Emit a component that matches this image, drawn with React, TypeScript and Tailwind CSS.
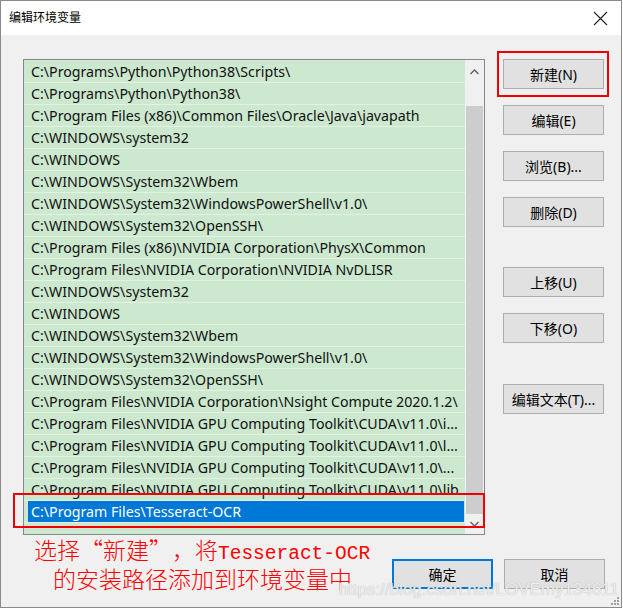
import React from "react";

const paths = [
  "C:\\Programs\\Python\\Python38\\Scripts\\",
  "C:\\Programs\\Python\\Python38\\",
  "C:\\Program Files (x86)\\Common Files\\Oracle\\Java\\javapath",
  "C:\\WINDOWS\\system32",
  "C:\\WINDOWS",
  "C:\\WINDOWS\\System32\\Wbem",
  "C:\\WINDOWS\\System32\\WindowsPowerShell\\v1.0\\",
  "C:\\WINDOWS\\System32\\OpenSSH\\",
  "C:\\Program Files (x86)\\NVIDIA Corporation\\PhysX\\Common",
  "C:\\Program Files\\NVIDIA Corporation\\NVIDIA NvDLISR",
  "C:\\WINDOWS\\system32",
  "C:\\WINDOWS",
  "C:\\WINDOWS\\System32\\Wbem",
  "C:\\WINDOWS\\System32\\WindowsPowerShell\\v1.0\\",
  "C:\\WINDOWS\\System32\\OpenSSH\\",
  "C:\\Program Files\\NVIDIA Corporation\\Nsight Compute 2020.1.2\\",
  "C:\\Program Files\\NVIDIA GPU Computing Toolkit\\CUDA\\v11.0\\i...",
  "C:\\Program Files\\NVIDIA GPU Computing Toolkit\\CUDA\\v11.0\\l...",
  "C:\\Program Files\\NVIDIA GPU Computing Toolkit\\CUDA\\v11.0\\...",
  "C:\\Program Files\\NVIDIA GPU Computing Toolkit\\CUDA\\v11.0\\lib",
];

const ui = "font-['Segoe_UI','Noto_Sans','Noto_Sans_CJK_SC',sans-serif]";

function Btn({ label, primary }: { label: string; primary?: boolean }) {
  return (
    <button
      className={`w-[101px] h-[30px] bg-[#e1e1e1] text-[14px] text-black ${ui} ${
        primary ? "border-2 border-[#0078d7]" : "border border-[#adadad]"
      }`}
    >
      {label}
    </button>
  );
}

function Chevron({ up }: { up?: boolean }) {
  return (
    <svg width="9" height="6" viewBox="0 0 9 6">
      <path
        d={up ? "M0.5 5 L4.5 1 L8.5 5" : "M0.5 1 L4.5 5 L8.5 1"}
        fill="none"
        stroke="#606060"
        strokeWidth="1.3"
      />
    </svg>
  );
}

export default function App() {
  return (
    <div className="w-[623px] h-[611px] bg-white">
      <div className="relative w-[622px] h-[608px] flex flex-col border border-[#8a8a8a] bg-[#f0f0f0]">
        {/* Title bar */}
        <div className="h-[34px] shrink-0 bg-white flex items-center justify-between pl-[8px] pr-[13px]">
          <span className={`text-[12px] text-black ${ui}`}>编辑环境变量</span>
          <svg width="15" height="15" viewBox="0 0 15 15">
            <path d="M1 1 L14 14 M14 1 L1 14" stroke="#222" strokeWidth="1.1" />
          </svg>
        </div>

        <div className="flex flex-1 pt-[24px] pl-[22px]">
          {/* Left side: path list + note */}
          <div className="flex flex-col w-[462px]">
            <div className="relative h-[476px] flex border border-[#828790] bg-[#cce8cf]">
              <div className="flex-1 overflow-hidden pt-[1px]">
                {paths.map((p, i) => (
                  <div
                    key={i}
                    className={`h-[22px] flex items-center pl-[7px] border-b border-[#e4f2e4] whitespace-nowrap overflow-hidden text-[14.2px] text-[#111] ${ui}`}
                  >
                    {p}
                  </div>
                ))}
                <div className="h-[22px] flex items-center pl-[4px] pr-[1px] border-b border-[#e4f2e4]">
                  <div
                    className={`h-[21px] w-full flex items-center pl-[3px] bg-[#0078d7] text-white text-[14.2px] ${ui}`}
                  >
                    C:\Program Files\Tesseract-OCR
                  </div>
                </div>
              </div>
              {/* Vertical scrollbar */}
              <div className="w-[19px] flex flex-col bg-[#f0f0f0]">
                <div className="h-[23px] flex items-center justify-center">
                  <Chevron up />
                </div>
                <div className="h-[23px]" />
                <div className="flex-1 mx-[1px] bg-[#cdcdcd]" />
                <div className="h-[20px] flex items-center justify-center">
                  <Chevron />
                </div>
              </div>
              {/* Highlight around the new entry */}
              <div className="absolute left-[-11px] right-[-1px] top-[433px] h-[35px] border-2 border-[#f00000]" />
            </div>

            <div className="pl-[11px] text-[23px] text-[#ff0000] font-['Noto_Sans_CJK_SC',serif] font-light">
              <div className="h-[29px] leading-[29px] whitespace-nowrap">
                选择<span className="inline-block w-[23px] text-right">“</span>新建
                <span className="inline-block w-[23px] text-left">”</span>，将
                <span className="text-[19.5px] font-['Liberation_Mono',monospace] font-normal">
                  Tesseract-OCR
                </span>
              </div>
              <div className="h-[29px] leading-[29px] pl-[19px]">的安装路径添加到环境变量中</div>
            </div>
          </div>

          {/* Right side: action buttons */}
          <div className="flex flex-col pl-[18px]">
            <div className="relative flex flex-col gap-[16px]">
              <Btn label="新建(N)" />
              <Btn label="编辑(E)" />
              <Btn label="浏览(B)..." />
              <Btn label="删除(D)" />
              <div className="h-[8px]" />
              <Btn label="上移(U)" />
              <Btn label="下移(O)" />
              <div className="h-[9px]" />
              <Btn label="编辑文本(T)..." />
              <div className="absolute left-[-6px] top-[-8px] w-[112px] h-[46px] border-2 border-[#f00000]" />
            </div>
          </div>
        </div>

        {/* Dialog buttons */}
        <div className="absolute right-[16px] bottom-[18px] flex gap-[11px]">
          <Btn label="确定" primary />
          <Btn label="取消" />
        </div>

        <span className="absolute right-[2px] bottom-[5px] text-[17px] text-white/80 font-['Liberation_Sans',sans-serif] [text-shadow:0_0_1px_#9a9a9a]">
          https://blog.csdn.net/LOVEmy134611
        </span>

        {/* Size grip */}
        <svg className="absolute right-[1px] bottom-[1px]" width="10" height="10" viewBox="0 0 10 10">
          <g fill="#a0a0a0">
            <rect x="7" y="1" width="2" height="2" />
            <rect x="4" y="4" width="2" height="2" />
            <rect x="7" y="4" width="2" height="2" />
            <rect x="1" y="7" width="2" height="2" />
            <rect x="4" y="7" width="2" height="2" />
            <rect x="7" y="7" width="2" height="2" />
          </g>
        </svg>
      </div>
    </div>
  );
}
